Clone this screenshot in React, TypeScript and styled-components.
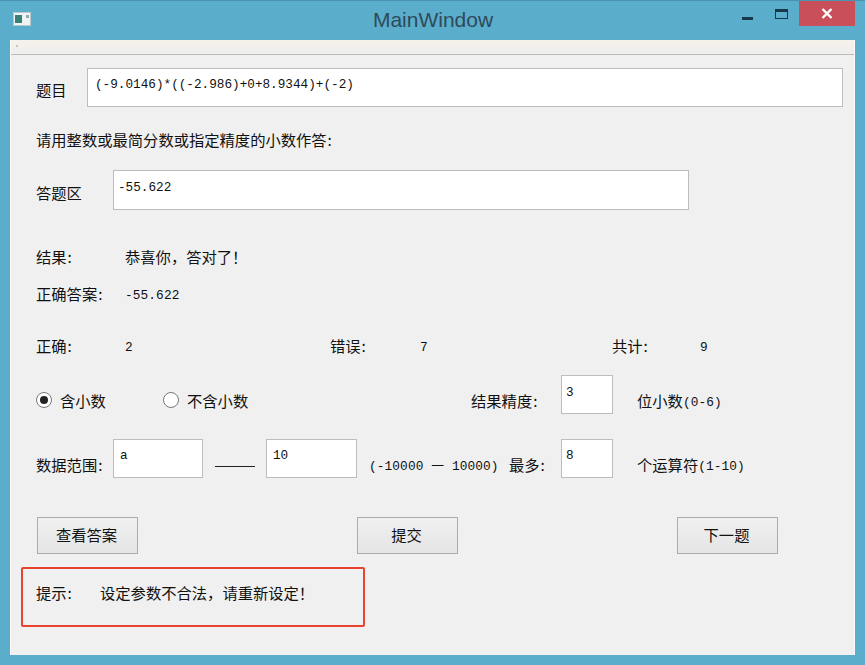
import React from 'react';
import styled, { createGlobalStyle } from 'styled-components';

const GlobalStyle = createGlobalStyle`
    html, body {
        margin: 0;
        padding: 0;
        background: #5aaecc;
    }
    * {
        box-sizing: border-box;
    }
`;

const CJK = `"Noto Sans CJK SC", "Liberation Sans", sans-serif`;
const MONO = `"Liberation Mono", "Noto Sans CJK SC", monospace`;

const App = () => {
    return (
        <Frame>
            <GlobalStyle />
            <TitleBar>
                <AppIcon>
                    <svg width="18" height="14" viewBox="0 0 18 14">
                        <rect x="0.5" y="0.5" width="17" height="13" fill="#eef3f3" stroke="#b8c8cc" />
                        <rect x="2" y="3" width="7" height="8" fill="#3c7f74" />
                        <rect x="13" y="3" width="3" height="3" fill="#8fa9b0" />
                    </svg>
                </AppIcon>
                <Title>MainWindow</Title>
                <Controls>
                    <MinIcon />
                    <MaxIcon />
                    <CloseButton>
                        <svg width="12" height="11" viewBox="0 0 12 11">
                            <path d="M1.5 1 L10.5 10 M10.5 1 L1.5 10" stroke="#fff" strokeWidth="2.4" />
                        </svg>
                    </CloseButton>
                </Controls>
            </TitleBar>
            <Client>
                <MenuBar>
                    <MenuGrip />
                </MenuBar>
                <Content>
                    <Row $h={39} $top={13}>
                        <Cell $w={51}><Label $mt={11}>题目</Label></Cell>
                        <Field $w={756} $h={39} $indent={7} readOnly value="(-9.0146)*((-2.986)+0+8.9344)+(-2)" />
                    </Row>
                    <Row $h={30} $top={18}>
                        <Label $mt={4}>请用整数或最简分数或指定精度的小数作答&#8202;:</Label>
                    </Row>
                    <Row $h={40} $top={15}>
                        <Cell $w={77}><Label $mt={12}>答题区</Label></Cell>
                        <Field $w={576} $h={40} $indent={4} $pt={7} readOnly value="-55.622" />
                    </Row>
                    <Row $h={24} $top={35}>
                        <Cell $w={89}><Label $mt={1}>结果&#8202;:</Label></Cell>
                        <Label $mt={1}>恭喜你，答对了！</Label>
                    </Row>
                    <Row $h={24} $top={14}>
                        <Cell $w={89}><Label>正确答案&#8202;:</Label></Cell>
                        <Label><Digits>-55.622</Digits></Label>
                    </Row>
                    <Row $h={24} $top={28}>
                        <Cell $w={89}><Label>正确&#8202;:</Label></Cell>
                        <Cell $w={205}><Label><Digits>2</Digits></Label></Cell>
                        <Cell $w={90}><Label>错误&#8202;:</Label></Cell>
                        <Cell $w={192}><Label><Digits>7</Digits></Label></Cell>
                        <Cell $w={88}><Label>共计&#8202;:</Label></Cell>
                        <Label><Digits>9</Digits></Label>
                    </Row>
                    <Row $h={39} $top={16}>
                        <Cell $w={127}>
                            <RadioOption>
                                <Radio $checked />
                                <Label>含小数</Label>
                            </RadioOption>
                        </Cell>
                        <Cell $w={308}>
                            <RadioOption>
                                <Radio />
                                <Label>不含小数</Label>
                            </RadioOption>
                        </Cell>
                        <Cell $w={90}><Label $mt={15}>结果精度&#8202;:</Label></Cell>
                        <Field $w={52} $h={39} $indent={4} $pt={7} readOnly value="3" />
                        <Gap $w={24} />
                        <Label $mt={15}>位小数<Digits>(0-6)</Digits></Label>
                    </Row>
                    <Row $h={39} $top={25}>
                        <Cell $w={77}><Label $mt={15}>数据范围&#8202;:</Label></Cell>
                        <Field $w={90} $h={39} $indent={6} readOnly value="a" />
                        <Gap $w={12} />
                        <Dash />
                        <Gap $w={11} />
                        <Field $w={91} $h={39} $indent={6} readOnly value="10" />
                        <Gap $w={12} />
                        <Cell $w={140}><Label $mt={15}><Digits>(-10000 一 10000)</Digits></Label></Cell>
                        <Cell $w={52}><Label $mt={15}>最多&#8202;:</Label></Cell>
                        <Field $w={52} $h={39} $indent={4} readOnly value="8" />
                        <Gap $w={24} />
                        <Label $mt={15}>个运算符<Digits>(1-10)</Digits></Label>
                    </Row>
                    <ButtonRow>
                        <PushButton>查看答案</PushButton>
                        <PushButton>提交</PushButton>
                        <PushButton>下一题</PushButton>
                    </ButtonRow>
                    <HintBox>
                        <Cell $w={64}><Label $mt={13}>提示&#8202;:</Label></Cell>
                        <Label $mt={13}>设定参数不合法，请重新设定！</Label>
                    </HintBox>
                </Content>
            </Client>
        </Frame>
    );
};

export default App;

const Frame = styled.div`
    width: 865px;
    height: 665px;
    display: flex;
    flex-direction: column;
    padding: 0 10px 10px;
    background: #5aaecc;
    border-top: 1px solid #4a93b0;
    overflow: hidden;
`;

const TitleBar = styled.div`
    height: 39px;
    flex: none;
    display: grid;
    grid-template-columns: 1fr auto 1fr;
`;

const AppIcon = styled.div`
    padding: 11px 0 0 3px;
    line-height: 0;
`;

const Title = styled.div`
    padding-top: 7px;
    margin-left: 1px;
    font-family: "Liberation Sans", Arial, sans-serif;
    font-size: 21px;
    line-height: 24px;
    color: #2f4a58;
`;

const Controls = styled.div`
    display: flex;
    justify-content: flex-end;
    align-items: flex-start;
`;

const MinIcon = styled.div`
    width: 11px;
    height: 3px;
    margin: 16px 22px 0 0;
    background: #17384a;
`;

const MaxIcon = styled.div`
    width: 13px;
    height: 10px;
    margin: 8px 11px 0 0;
    border: 1px solid #17384a;
    border-top-width: 3px;
`;

const CloseButton = styled.div`
    width: 56px;
    height: 25px;
    display: flex;
    align-items: center;
    justify-content: center;
    background: #c9505a;
`;

const Client = styled.div`
    flex: 1;
    display: flex;
    flex-direction: column;
    background: #f0f0f0;
    border-left: 1px solid #fbfbfb;
    border-right: 1px solid #fbfbfb;
`;

const MenuBar = styled.div`
    height: 15px;
    flex: none;
    padding: 5px 0 0 5px;
    background: linear-gradient(#f6f1ea, #efefef);
    border-bottom: 1px solid #bcbcbc;
`;

const MenuGrip = styled.div`
    width: 2px;
    height: 2px;
    background: #c9c2b8;
`;

const Content = styled.div`
    display: flex;
    flex-direction: column;
    padding-left: 25px;
`;

const Row = styled.div<{ $h: number; $top: number }>`
    display: flex;
    align-items: flex-start;
    height: ${(p) => p.$h}px;
    margin-top: ${(p) => p.$top}px;
`;

const Cell = styled.div<{ $w: number }>`
    width: ${(p) => p.$w}px;
    flex: none;
`;

const Gap = styled.div<{ $w: number }>`
    width: ${(p) => p.$w}px;
    flex: none;
`;

const Label = styled.span<{ $mt?: number }>`
    display: block;
    margin-top: ${(p) => p.$mt ?? 0}px;
    font-family: ${CJK};
    font-size: 15.3px;
    line-height: 20px;
    color: #111;
    white-space: nowrap;
`;

const Digits = styled.span`
    vertical-align: 1px;
    font-family: ${MONO};
    font-size: 12.8px;
    letter-spacing: 0.1px;
    white-space: pre;
`;

const Field = styled.input<{ $w: number; $h: number; $indent: number; $pt?: number }>`
    width: ${(p) => p.$w}px;
    height: ${(p) => p.$h}px;
    flex: none;
    padding: ${(p) => p.$pt ?? 6}px 0 ${(p) => p.$h - (p.$pt ?? 6) - 20}px ${(p) => p.$indent}px;
    background: #fff;
    border: 1px solid #bdbdbd;
    outline: none;
    font-family: ${MONO};
    font-size: 12.7px;
    line-height: 19px;
    color: #111;
`;

const RadioOption = styled.div`
    display: flex;
    align-items: center;
    gap: 8px;
    margin-top: 15px;
`;

const Radio = styled.div<{ $checked?: boolean }>`
    width: 16px;
    height: 16px;
    flex: none;
    border-radius: 50%;
    border: 1px solid #7a7a7a;
    background: #fff;
    display: flex;
    align-items: center;
    justify-content: center;
    &::after {
        content: '';
        width: 8px;
        height: 8px;
        border-radius: 50%;
        background: ${(p) => (p.$checked ? '#222' : 'transparent')};
    }
`;

const Dash = styled.div`
    width: 40px;
    height: 1px;
    flex: none;
    margin-top: 27px;
    background: #222;
`;

const ButtonRow = styled.div`
    display: flex;
    gap: 219px;
    margin: 39px 0 0 1px;
`;

const PushButton = styled.button`
    width: 101px;
    height: 37px;
    padding: 0 2px 3px 0;
    border: 1px solid #acacac;
    background: linear-gradient(#f0f0f0, #e5e5e5);
    font-family: ${CJK};
    font-size: 15.3px;
    color: #111;
`;

const HintBox = styled.div`
    width: 344px;
    height: 60px;
    margin: 13px 0 0 -15px;
    padding-left: 13px;
    display: flex;
    align-items: flex-start;
    border: 2px solid #e8432e;
    border-radius: 2px;
`;
